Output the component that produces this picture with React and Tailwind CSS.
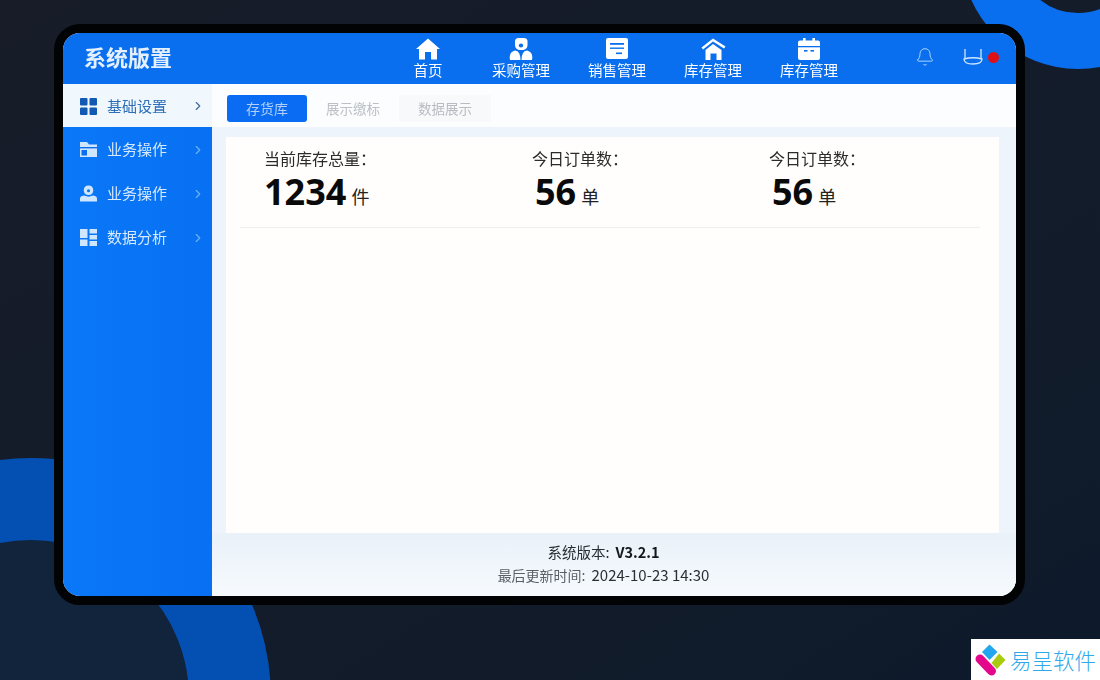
import { Bell, ChevronRight } from 'lucide-react'

function HomeIcon() {
  return (
    <svg width="24" height="22" viewBox="0 0 24 22" fill="#fff">
      <path d="M12 0.5 L24 11 L21 11 L21 21.5 L15 21.5 L15 14 L9 14 L9 21.5 L3 21.5 L3 11 L0 11 Z" />
    </svg>
  )
}

function PeopleIcon() {
  return (
    <svg width="24" height="22" viewBox="0 0 24 22" fill="#fff">
      <path d="M6 3.5 Q6 0 9.5 0 H15 Q18.5 0 18.5 3.5 V7 Q18.5 11 14.5 12 H10 Q6 11 6 7 Z" />
      <ellipse cx="12" cy="7.5" rx="2.2" ry="2" fill="#0a6fee" />
      <path d="M1 22 Q-0.5 14 6 12.5 Q11.5 13 11.5 22 Z" />
      <path d="M12.5 22 Q12.5 13 18 12.5 Q24.5 14 23 22 Z" />
    </svg>
  )
}

function NoteIcon() {
  return (
    <svg width="22" height="21" viewBox="0 0 22 21">
      <rect x="0" y="0" width="22" height="21" rx="2" fill="#fff" />
      <rect x="4" y="5" width="14" height="1.8" fill="#0a6fee" />
      <rect x="4" y="9.5" width="14" height="1.4" fill="#0a6fee" />
      <rect x="10" y="14.5" width="6" height="1.6" fill="#0a6fee" />
    </svg>
  )
}

function RoofHomeIcon() {
  return (
    <svg width="25" height="22" viewBox="0 0 25 22" fill="#fff">
      <path d="M0.5 9.5 L12 0.5 L24.5 8.5 L23 10.5 L12 3.5 L2 11.5 Z" />
      <path d="M12 6 L20.5 12 V22 H15.5 V15.5 H9.5 V22 H4.5 V12 Z" />
    </svg>
  )
}

function CalendarIcon() {
  return (
    <svg width="22" height="22" viewBox="0 0 22 22" fill="#fff">
      <rect x="5" y="0" width="2.6" height="5" />
      <rect x="14.4" y="0" width="2.6" height="5" />
      <path d="M2 2.5 H20 Q22 2.5 22 4.5 V20 Q22 22 20 22 H2 Q0 22 0 20 V4.5 Q0 2.5 2 2.5 Z" />
      <rect x="0" y="8" width="22" height="1.3" fill="#0a6fee" />
      <rect x="6" y="12" width="3.5" height="1.6" fill="#0a6fee" />
      <rect x="12.5" y="12" width="3.5" height="1.6" fill="#0a6fee" />
    </svg>
  )
}

function GridIcon() {
  return (
    <svg width="17" height="17" viewBox="0 0 17 17" fill="#1259b4">
      <rect x="0" y="0" width="7.5" height="7.5" rx="1" />
      <rect x="9.5" y="0" width="7.5" height="7.5" rx="1" />
      <rect x="0" y="9.5" width="7.5" height="7.5" rx="1" />
      <rect x="9.5" y="9.5" width="7.5" height="7.5" rx="1" />
    </svg>
  )
}

function FolderIcon() {
  return (
    <svg width="17" height="17" viewBox="0 0 17 17">
      <path d="M0 1 H7 L9 3.5 H17 V16 H0 Z" fill="#cfe6ff" />
      <rect x="0" y="6" width="17" height="1.4" fill="#0a6fee" />
      <rect x="1.5" y="9" width="5.5" height="5.5" fill="#0a6fee" />
    </svg>
  )
}

function UserIcon() {
  return (
    <svg width="17" height="17" viewBox="0 0 18 17" fill="#cfe6ff">
      <path d="M9 0 Q14 0 14 5 Q14 10 9 10 Q4 10 4 5 Q4 0 9 0 Z" />
      <circle cx="9" cy="5.5" r="1.6" fill="#0a6fee" />
      <path d="M0 17 V14 Q0 11 4 10.5 L9 12 L14 10.5 Q18 11 18 14 V17 Z" />
    </svg>
  )
}

function ChartIcon() {
  return (
    <svg width="17" height="17" viewBox="0 0 17 17" fill="#cfe6ff">
      <rect x="0" y="0" width="7.5" height="9" />
      <rect x="0" y="10.5" width="7.5" height="6.5" />
      <rect x="9.5" y="0" width="7.5" height="4.5" />
      <rect x="9.5" y="6" width="7.5" height="4.5" />
      <rect x="9.5" y="12" width="7.5" height="5" />
    </svg>
  )
}

function LogoMark() {
  return (
    <svg width="32" height="32" viewBox="0 0 32 32">
      <path d="M15.5 0.5 L23.5 8 L15.5 16 L8 8 Z" fill="#22a7ee" />
      <path d="M25 9.5 L31.5 16 L23 25 L17.5 19 Z" fill="#aacb0d" />
      <path d="M6 15 L17.5 27" stroke="#e4078c" strokeWidth="9" strokeLinecap="round" />
    </svg>
  )
}

const navItems = [
  { label: '首页', icon: HomeIcon, width: 'w-[90px]' },
  { label: '采购管理', icon: PeopleIcon, width: 'w-[96px]' },
  { label: '销售管理', icon: NoteIcon, width: 'w-[96px]' },
  { label: '库存管理', icon: RoofHomeIcon, width: 'w-[96px]' },
  { label: '库存管理', icon: CalendarIcon, width: 'w-[96px]' },
]

const sideItems = [
  { label: '业务操作', icon: FolderIcon },
  { label: '业务操作', icon: UserIcon },
  { label: '数据分析', icon: ChartIcon },
]

const stats = [
  { label: '当前库存总量：', value: '1234', unit: '件', width: 'w-[268px]', indent: '' },
  { label: '今日订单数：', value: '56', unit: '单', width: 'w-[237px]', indent: 'pl-[3px]' },
  { label: '今日订单数：', value: '56', unit: '单', width: 'w-[200px]', indent: 'pl-[3px]' },
]

export default function App() {
  return (
    <div className="relative w-[1100px] h-[680px] overflow-hidden bg-gradient-to-br from-[#171c28] via-[#141c2a] to-[#0d1a2b] font-['Noto_Sans_CJK_SC','Noto_Sans',sans-serif]">
      {/* background rings */}
      <div className="absolute left-[961px] top-[-165px] w-[234px] h-[234px] rounded-full border-[56px] border-[#0a6fee]" />
      <div className="absolute left-[-209px] top-[458px] w-[480px] h-[480px] rounded-full border-[82px] border-[#0450b2] bg-[#12233c]" />

      <div className="relative pl-[54px] pt-[24px]">
        <div className="w-[971px] h-[581px] border-[9px] border-[#020305] rounded-[26px] overflow-hidden flex flex-col bg-white">
          <header className="h-[51px] shrink-0 bg-[#0a6fee] flex items-center pl-[21px] text-white">
            <div className="w-[88px] pb-[5px] text-[22px] leading-none font-bold text-[#e4f0ff] blur-[0.4px] whitespace-nowrap">系统版置</div>
            <nav className="ml-[211px] flex">
              {navItems.map((item, i) => (
                <div key={i} className={`${item.width} flex flex-col items-center`}>
                  <div className="h-[23px] flex items-center"><item.icon /></div>
                  <span className="text-[14.5px] leading-[20px] whitespace-nowrap blur-[0.3px]">{item.label}</span>
                </div>
              ))}
            </nav>
            <div className="ml-[58px] pb-[3px] flex items-center">
              <Bell size={20} strokeWidth={1.2} className="text-[#a8d2ff]" />
              <svg width="22" height="20" viewBox="0 0 22 20" fill="none" stroke="#cfe6ff" strokeWidth="1.3" className="ml-[27px]">
                <path d="M3 2 V11 M19 2 V11" />
                <path d="M2 12 Q11 9.5 20 12 Q20 17 11 17 Q2 17 2 12 Z" />
              </svg>
              <span className="ml-[4px] w-[11px] h-[11px] rounded-full bg-[#e01018]" />
            </div>
          </header>

          <div className="flex-1 flex min-h-0">
            <aside className="w-[149px] shrink-0 bg-gradient-to-r from-[#0a78f8] to-[#0870f2]">
              <div className="h-[43px] bg-[#f0f7fd] flex items-center pl-[17px] pt-[1px]">
                <GridIcon />
                <span className="ml-[10px] text-[15px] text-[#2d6fb8] blur-[0.3px]">基础设置</span>
                <ChevronRight size={14} strokeWidth={2} className="ml-[24px] text-[#3d6c9c]" />
              </div>
              {sideItems.map((item, i) => (
                <div key={i} className="h-[44px] flex items-center pl-[17px] pt-[1px]">
                  <item.icon />
                  <span className="ml-[10px] text-[15px] text-[#d5e9ff] blur-[0.3px]">{item.label}</span>
                  <ChevronRight size={14} strokeWidth={2} className="ml-[24px] text-[#6db0fb]" />
                </div>
              ))}
            </aside>

            <main className="flex-1 min-w-0 flex flex-col bg-[#eef4fb]">
              <div className="h-[43px] shrink-0 bg-[#fbfdfe] flex items-center pl-[15px] pt-[6px]">
                <div className="w-[80px] h-[27px] rounded-[3px] bg-[#0a6cf2] flex items-center justify-center text-[14px] text-[#b0d0f8] blur-[0.4px]">存货库</div>
                <div className="w-[92px] text-center text-[13.5px] text-[#bcc0c6] blur-[0.7px]">展示缴标</div>
                <div className="w-[92px] h-[27px] flex items-center justify-center bg-[#f8f9fb] text-[13.5px] text-[#b8bcc2] blur-[0.7px]">数据展示</div>
              </div>
              <div className="ml-[14px] mr-[17px] mt-[10px] h-[396px] shrink-0 bg-[#fffefc]">
                <div className="flex h-[90px] pl-[38px] pt-[9px]">
                  {stats.map((s, i) => (
                    <div key={i} className={s.width}>
                      <div className="text-[16px] leading-[24px] text-[#2b2b2b] blur-[0.3px] whitespace-nowrap">{s.label}</div>
                      <div className={`${s.indent} mt-[2px] flex items-end text-[#0a0a0a]`}>
                        <span className="text-[36px] leading-[39px] font-bold font-['Noto_Sans',sans-serif]">{s.value}</span>
                        <span className="ml-[5px] text-[18px] leading-[30px] text-[#222]">{s.unit}</span>
                      </div>
                    </div>
                  ))}
                </div>
                <div className="ml-[14px] mr-[19px] h-px bg-[#eceef0]" />
              </div>
              <footer className="flex-1 flex flex-col items-center justify-center pr-[21px] pb-[2px] bg-gradient-to-b from-[#e9f1f9] to-[#f6fafd]">
                <div className="flex items-baseline text-[14.5px] leading-[22px] text-[#2a2f36] blur-[0.3px] whitespace-nowrap">
                  <span>系统版本:</span>
                  <b className="ml-[6px] font-bold text-[#14181d]">V3.2.1</b>
                </div>
                <div className="flex items-baseline leading-[24px] text-[#5a6068] blur-[0.3px] whitespace-nowrap">
                  <span className="text-[14px]">最后更新时间:</span>
                  <span className="ml-[6px] text-[15px] text-[#2a2f36]">2024-10-23 14:30</span>
                </div>
              </footer>
            </main>
          </div>
        </div>
      </div>

      {/* watermark */}
      <div className="absolute right-0 bottom-0 w-[129px] h-[41px] bg-white flex items-center pl-[3px]">
        <LogoMark />
        <span className="ml-[4px] text-[21.5px] leading-none text-[#2ea9ec] font-light whitespace-nowrap">易呈软件</span>
      </div>
    </div>
  )
}
